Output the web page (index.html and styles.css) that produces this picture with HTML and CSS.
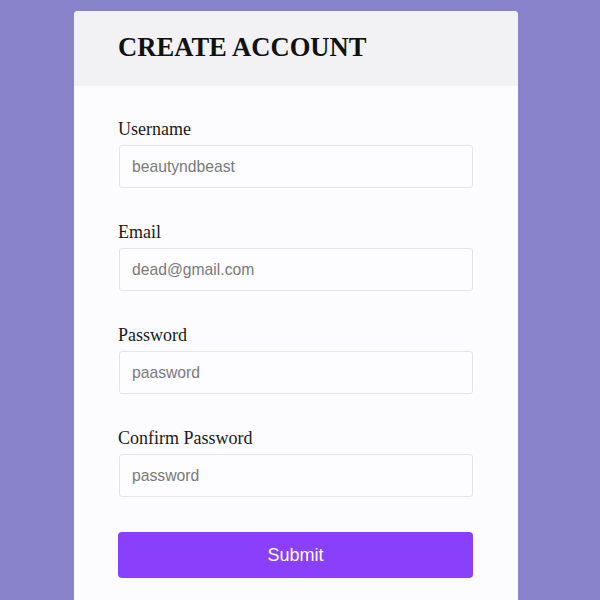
FILE: index.html
```html
<!DOCTYPE html>
<html>
<head>
<meta charset="utf-8">
<link rel="stylesheet" href="styles.css">
</head>
<body>
<div class="card">
  <div class="card-header">
    <h2 class="title">CREATE ACCOUNT</h2>
  </div>
  <form class="card-body">
    <div class="field">
      <label class="label">Username</label>
      <input class="input" type="text" placeholder="beautyndbeast">
    </div>
    <div class="field">
      <label class="label">Email</label>
      <input class="input" type="text" placeholder="dead@gmail.com">
    </div>
    <div class="field">
      <label class="label">Password</label>
      <input class="input" type="text" placeholder="paasword">
    </div>
    <div class="field">
      <label class="label">Confirm Password</label>
      <input class="input" type="text" placeholder="password">
    </div>
    <button class="submit" type="button">Submit</button>
  </form>
</div>
</body>
</html>
```
FILE: styles.css
```css
html, body {
  margin: 0;
  padding: 0;
}
body {
  background: #8983cb;
  height: 600px;
  overflow: hidden;
  font-family: "Liberation Serif", "Times New Roman", serif;
}
.card {
  width: 444px;
  margin: 11px 0 0 74px;
  background: #fcfbfd;
  border-radius: 4px 4px 0 0;
  overflow: hidden;
  height: 589px;
}
.card-header {
  background: #f2f2f4;
  height: 75px;
  box-sizing: border-box;
  padding: 21px 44px 0;
}
.title {
  margin: 0;
  font-size: 26.6px;
  line-height: 30px;
  font-weight: bold;
  color: #111;
}
.card-body {
  display: flex;
  flex-direction: column;
  gap: 34px;
  padding: 33px 45px 0 44px;
}
.field {
  display: flex;
  flex-direction: column;
  gap: 6px;
}
.label {
  font-size: 18px;
  line-height: 20px;
  color: #1a1a1a;
}
.input {
  box-sizing: border-box;
  height: 43px;
  width: 354px;
  margin-left: 1px;
  border: 1px solid #e5e4e8;
  border-radius: 3px;
  background: #fdfcfe;
  padding: 0 12px;
  font-family: "Liberation Sans", Arial, sans-serif;
  font-size: 15.7px;
  outline: none;
}
.input::placeholder {
  color: #7a7a7a;
}
.submit {
  box-sizing: border-box;
  height: 46px;
  width: 355px;
  margin-top: 1px;
  border: none;
  border-radius: 4px;
  background: #8a3ffb;
  color: #fff;
  font-family: "Liberation Sans", Arial, sans-serif;
  font-size: 18px;
}
```
